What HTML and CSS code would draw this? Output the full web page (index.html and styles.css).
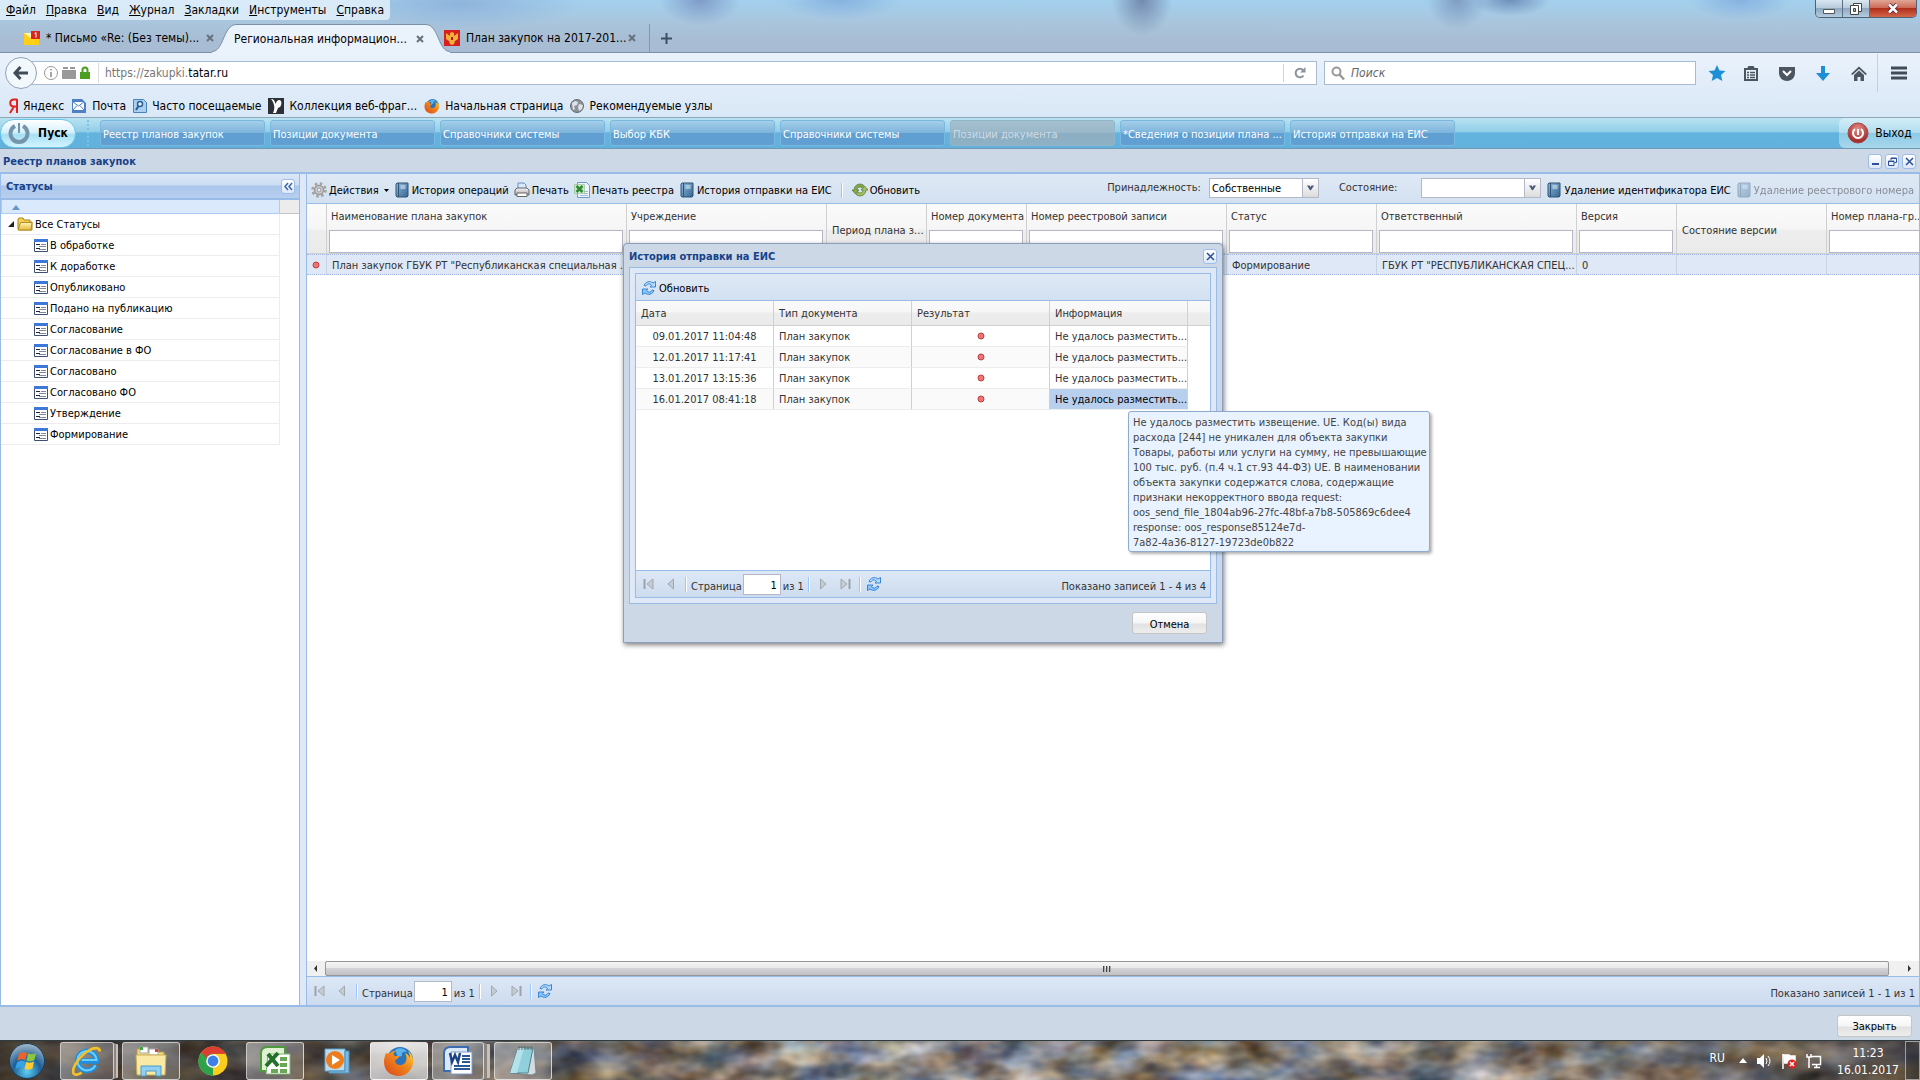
FILE: index.html
```
<!DOCTYPE html>
<html lang="ru">
<head>
    <meta charset="UTF-8">
    <meta name="viewport" content="width=device-width, initial-scale=1.0">
    <title>Реестр планов закупок</title>
    <link rel="stylesheet" href="styles.css">
</head>
<body>

<!-- Иконки -->
<svg class="sprite" xmlns="http://www.w3.org/2000/svg">
    <defs>
        <linearGradient id="gBook" x1="0" x2="1" y1="0" y2="1"><stop offset="0" stop-color="#8fbbe0"/><stop offset="1" stop-color="#35648f"/></linearGradient>
        <linearGradient id="gSilver" x1="0" x2="0" y1="0" y2="1"><stop offset="0" stop-color="#f6f6f6"/><stop offset="1" stop-color="#a9a9a9"/></linearGradient>
        <radialGradient id="gOrb" cx=".5" cy=".8" r=".8"><stop offset="0" stop-color="#5fd0f5"/><stop offset=".5" stop-color="#1d5f96"/><stop offset="1" stop-color="#a9bccb"/></radialGradient>
        <radialGradient id="gRed" cx=".5" cy=".3" r=".8"><stop offset="0" stop-color="#e8908a"/><stop offset="1" stop-color="#8d1010"/></radialGradient>
        <linearGradient id="gFox" x1="0" x2="1" y1="1" y2="0"><stop offset="0" stop-color="#d8431b"/><stop offset=".6" stop-color="#f28a1c"/><stop offset="1" stop-color="#ffd83c"/></linearGradient>
        <linearGradient id="gFolder" x1="0" x2="0" y1="0" y2="1"><stop offset="0" stop-color="#fff6b8"/><stop offset="1" stop-color="#e8b93c"/></linearGradient>
        <linearGradient id="gShade" x1="0" x2="1" y1="0" y2="0"><stop offset="0" stop-color="#1c1610" stop-opacity=".7"/><stop offset=".25" stop-color="#33271c" stop-opacity=".45"/><stop offset=".4" stop-color="#33271c" stop-opacity="0"/><stop offset=".8" stop-color="#33271c" stop-opacity=".1"/><stop offset="1" stop-color="#241c16" stop-opacity=".6"/></linearGradient>
    </defs>
    <symbol id="i-close" viewBox="0 0 8 8"><path d="M1 1l6 6M7 1L1 7" stroke="currentColor" stroke-width="2"/></symbol>
    <symbol id="i-book" viewBox="0 0 16 16"><path d="M3 1h11v13l-1 1H3L2 14V2z" fill="url(#gBook)" stroke="#2f5374"/><path d="M4.500 1v14" stroke="#2f5374"/><path d="M6.500 4h5M6.500 6h5" stroke="#e3f0fb"/></symbol>
    <symbol id="i-gear" viewBox="0 0 16 16"><circle cx="8" cy="8" r="6.500" fill="none" stroke="#a3a3a3" stroke-width="2.500" stroke-dasharray="2.600 2.500"/><circle cx="8" cy="8" r="4.500" fill="#cfcfcf" stroke="#9a9a9a" stroke-width="1.500"/><circle cx="8" cy="8" r="2" fill="#e6eef8" stroke="#999"/></symbol>
    <symbol id="i-print" viewBox="0 0 16 16"><path d="M4 8V1h6l2 2v5z" fill="#d7e9fb" stroke="#6b8fb5"/><path d="M1 8l2-2h10l2 2v5H1z" fill="url(#gSilver)" stroke="#666"/><path d="M3 11h10v3.500H3z" fill="#fff" stroke="#666"/></symbol>
    <symbol id="i-xls" viewBox="0 0 16 16"><path d="M3.500.5h9l3 3v12h-12z" fill="#eef5ff" stroke="#6f97c4"/><path d="M10 9.500h4M10 11.500h4M6 13.500h8" stroke="#9dbbe0"/><path d="M.5 2.500h10v9H.5z" fill="#cde8c8" stroke="#7cb07a" stroke-width=".5"/><path d="M2.500 4l6 6M8.500 4l-6 6" stroke="#2f8a35" stroke-width="2.500"/></symbol>
    <symbol id="i-sync" viewBox="0 0 16 16"><path d="M8 2a6 6 0 0 0-6 6H0l3.500 4L7 8H5a3 3 0 0 1 5-2.200l2-2.200A6 6 0 0 0 8 2z" fill="#84a848" stroke="#50722a" stroke-width=".7"/><path d="M8 14a6 6 0 0 0 6-6h2l-3.500-4L9 8h2a3 3 0 0 1-5 2.200l-2 2.200A6 6 0 0 0 8 14z" fill="#a0bf62" stroke="#50722a" stroke-width=".7"/></symbol>
    <symbol id="i-refresh" viewBox="0 0 16 16"><path d="M3 5.500C4.500 1.500 9 .5 12 3l2.500-1.500V7H9l1.500-1.800C8.500 3.200 6 3.600 5 6z" fill="#b5dafb" stroke="#2a7dd0" stroke-width=".9"/><path d="M13 10.500C11.500 14.500 7 15.500 4 13l-2.500 1.500V9H7l-1.500 1.800c2 2 4.500 1.600 5.500-.8z" fill="#8cc5f8" stroke="#2a7dd0" stroke-width=".9"/></symbol>
    <symbol id="i-first" viewBox="0 0 16 16"><path d="M3.500 3v10" stroke="#9aa2ab" stroke-width="2"/><path d="M12 3v10L6 8z" fill="#c5cbd2" stroke="#a0a8b0"/></symbol>
    <symbol id="i-prev" viewBox="0 0 16 16"><path d="M10.500 3v10L5 8z" fill="#c5cbd2" stroke="#a0a8b0"/></symbol>
    <symbol id="i-next" viewBox="0 0 16 16"><path d="M5.500 3v10L11 8z" fill="#c5cbd2" stroke="#a0a8b0"/></symbol>
    <symbol id="i-last" viewBox="0 0 16 16"><path d="M12.500 3v10" stroke="#9aa2ab" stroke-width="2"/><path d="M4 3v10l6-5z" fill="#c5cbd2" stroke="#a0a8b0"/></symbol>
    <symbol id="i-folder" viewBox="0 0 16 16"><path d="M1 13V3l1-1h4l1 2h6v2h2v8H2z" fill="#f3cf55" stroke="#a98518"/><path d="M1 14L3.500 6.500H15L14 14z" fill="url(#gFolder)" stroke="#b48f22"/></symbol>
    <symbol id="i-form" viewBox="0 0 14 13"><path d="M.5.5h13v12H.5z" fill="#fff" stroke="#3f4f74"/><path d="M0 0h14v3H0z" fill="#3d78d8"/><path d="M2 5.500h4M2 9.500h4" stroke="#223"/><path d="M5 7.500h7M7 5.500h5M5 10.500h7" stroke="#7c8797"/></symbol>
    <symbol id="i-dot" viewBox="0 0 8 8"><circle cx="4" cy="4" r="3" fill="#e87878" stroke="#c93a3f"/></symbol>
    <symbol id="i-fox" viewBox="0 0 32 32"><circle cx="17" cy="15" r="13" fill="#2a74bd"/><path d="M12 5c4-3 10-2 12 2-4-1-6 1-5 4l-4 1z" fill="#5cb4ea"/><path d="M3 8c1 1 3 1 4 0 2-2 4-2 6-2-3 2-3 4-1 5h4c0 3-3 3-4 5 1 5 7 5 10 2 2-3 2-7 0-10 3 1 4 3 5 5 0-3-1-5-2-7 4 3 6 8 5 13-2 8-8 12-14 12C8 31 1 26 1 17c0-4 1-6 2-9z" fill="url(#gFox)"/></symbol>
    <symbol id="i-chevron" viewBox="0 0 8 6"><path d="M0 0h3l1 2 1-2h3L4.500 5.500h-1z" fill="#44567c"/></symbol>
</svg>

<!-- Окно браузера -->
<header class="browser">
    <nav class="menubar">
        <a href="#"><u>Ф</u>айл</a>
        <a href="#"><u>П</u>равка</a>
        <a href="#"><u>В</u>ид</a>
        <a href="#"><u>Ж</u>урнал</a>
        <a href="#"><u>З</u>акладки</a>
        <a href="#"><u>И</u>нструменты</a>
        <a href="#"><u>С</u>правка</a>
    </nav>
    <div class="win-buttons">
        <button aria-label="Свернуть"><svg width="14" height="12" viewBox="0 0 14 12"><path d="M1.500 6.500h11v4h-11z" fill="#fff" stroke="#555"/></svg></button>
        <button aria-label="Восстановить"><svg width="12" height="13" viewBox="0 0 12 13"><path d="M3.500 1.500h8v8h-8z" fill="#fff" stroke="#444"/><path d="M.5 3.500h8v9h-8z" fill="#fff" stroke="#444"/><path d="M3.500 6.500h2v3h-2z" fill="#9db4c8" stroke="#444"/></svg></button>
        <button class="win-close" aria-label="Закрыть окно"><svg width="12" height="11" viewBox="0 0 12 11"><path d="M2 1.500l8 8M10 1.500l-8 8" stroke="#523" stroke-width="4"/><path d="M2 1.500l8 8M10 1.500l-8 8" stroke="#fff" stroke-width="2.500"/></svg></button>
    </div>

    <div class="tabs">
        <div class="tab tab-mail">
            <svg width="16" height="14" viewBox="0 0 16 14"><path d="M0 2h15v12H0z" fill="#ffcf17"/><path d="M0 2l8 6V2z" fill="#fff3ba"/><path d="M7 0h9v8H7z" fill="#d9261c"/><path d="M10.500 2.500l1.500-1v5" stroke="#fff" fill="none"/></svg>
            <span class="tab-text">* Письмо «Re: (Без темы)...</span>
            <button class="tab-close" aria-label="Закрыть вкладку"><svg width="8" height="8"><use href="#i-close"/></svg></button>
        </div>
        <div class="tab tab-active">
            <svg class="edge" width="24" height="29" viewBox="0 0 24 29"><path d="M0 29V27.500C12 27.500 11 1 24 .5V29z" fill="#eaf2fc"/><path d="M0 27.500C12 27.500 11 1 24 .5" fill="none" stroke="#7b90a6"/></svg>
            <div class="tab-body">
                <span class="tab-text">Региональная информацион...</span>
                <button class="tab-close" aria-label="Закрыть вкладку"><svg width="8" height="8"><use href="#i-close"/></svg></button>
            </div>
            <svg class="edge" width="24" height="29" viewBox="0 0 24 29"><path d="M24 29V27.500C12 27.500 13 1 0 .5V29z" fill="#eaf2fc"/><path d="M24 27.500C12 27.500 13 1 0 .5" fill="none" stroke="#7b90a6"/></svg>
        </div>
        <div class="tab tab-plan">
            <svg width="16" height="16" viewBox="0 0 16 16"><path d="M0 0h16v16H0z" fill="#d81f1f"/><path d="M2 3l4 3V3l2-1 2 1v3l4-3v6l-3 2-1 3-2 1-2-1-1-3-3-2z" fill="#f0b13a"/><path d="M7 7h2v3H7z" fill="#b01717"/></svg>
            <span class="tab-text">План закупок на 2017-201...</span>
            <button class="tab-close" aria-label="Закрыть вкладку"><svg width="8" height="8"><use href="#i-close"/></svg></button>
        </div>
        <button class="tab-new" aria-label="Новая вкладка"><svg width="11" height="11" viewBox="0 0 11 11"><path d="M5.500 0v11M0 5.500h11" stroke="#3d4f63" stroke-width="2"/></svg></button>
    </div>

    <div class="navbar">
        <button class="back" aria-label="Назад"><svg width="16" height="14" viewBox="0 0 16 14"><path d="M7.500 1L2 7l5.500 6M2 7h13" fill="none" stroke="#414b57" stroke-width="3"/></svg></button>
        <div class="urlbar">
            <svg width="14" height="14" viewBox="0 0 14 14"><circle cx="7" cy="7" r="6.500" fill="none" stroke="#999"/><path d="M7 6v5M7 3v1.500" stroke="#888" stroke-width="1.500"/></svg>
            <svg width="14" height="14" viewBox="0 0 14 14"><path d="M0 4h14v9H0zM1 1h5v2H1zM8 1h5v2H8z" fill="#999"/></svg>
            <svg width="10" height="14" viewBox="0 0 10 14"><path d="M2.500 7V4a2.500 2.500 0 0 1 5 0v3" fill="none" stroke="#4a9e22" stroke-width="2"/><path d="M0 6h10v7H0z" fill="#4a9e22"/></svg>
            <span class="url">https://zakupki.<b>tatar.ru</b></span>
            <button class="reload" aria-label="Обновить страницу"><svg width="12" height="12" viewBox="0 0 12 12"><path d="M9.500 8.500A4.300 4.300 0 1 1 9 3" fill="none" stroke="#8a939c" stroke-width="2"/><path d="M11.500 0v5.500H6z" fill="#8a939c"/></svg></button>
        </div>
        <div class="search">
            <svg width="14" height="15" viewBox="0 0 14 15"><circle cx="5.500" cy="5.500" r="4" fill="none" stroke="#999" stroke-width="2"/><path d="M8.500 8.500l4.500 5" stroke="#999" stroke-width="2.500"/></svg>
            <input type="text" placeholder="Поиск" aria-label="Поиск">
        </div>
        <div class="nav-icons">
            <button class="nav-star" aria-label="Закладка"><svg width="18" height="18" viewBox="0 0 18 18"><path d="M9 1l2.500 5.500 6 .6-4.500 4 1.300 6L9 14l-5.300 3.100 1.300-6-4.500-4 6-.6z" fill="#1c8fd6"/></svg></button>
            <button aria-label="Список закладок"><svg width="16" height="16" viewBox="0 0 16 16"><path d="M2 4h12v11H2zM5 4l1-2h4l1 2" fill="none" stroke="#4c5661" stroke-width="2"/><path d="M4 7.500h2M7 7.500h5M4 10h2M7 10h5M4 12.500h2M7 12.500h5" stroke="#4c5661" stroke-width="1.500"/></svg></button>
            <button aria-label="Pocket"><svg width="16" height="15" viewBox="0 0 16 15"><path d="M0 1h16v6c0 5-4 8-8 8s-8-3-8-8z" fill="#4c5661"/><path d="M4 5l4 4 4-4" fill="none" stroke="#fff" stroke-width="2"/></svg></button>
            <button aria-label="Загрузки"><svg width="14" height="15" viewBox="0 0 14 15"><path d="M5 0h4v7h5l-7 8-7-8h5z" fill="#1c8fd6"/></svg></button>
            <button aria-label="Домой"><svg width="16" height="15" viewBox="0 0 16 15"><path d="M0 8l8-7.500L16 8l-1.500 1L8 3 1.500 9z" fill="#4c5661"/><path d="M3 9l5-4.500L13 9v6h-3.500v-4h-3v4H3z" fill="#4c5661"/></svg></button>
            <button class="nav-menu" aria-label="Меню"><svg width="16" height="14" viewBox="0 0 16 14"><path d="M0 2h16M0 7h16M0 12h16" stroke="#414b57" stroke-width="3"/></svg></button>
        </div>
    </div>

    <nav class="bookmarks">
        <a href="#"><svg width="10" height="16" viewBox="0 0 10 16"><path d="M9 1v14M9 1.500H6C1 1.500 1 8.500 6 8.500h3M6 8.500L2 15" fill="none" stroke="#e3231b" stroke-width="2"/></svg>Яндекс</a>
        <a href="#"><svg width="16" height="16" viewBox="0 0 16 16"><path d="M1 1h10l4 4v10H1z" fill="#4f80c4"/><path d="M2 4h11v8H2z" fill="#fff"/><path d="M2 4l5.500 4L13 4M2 12l4-4.500M13 12L9 7.500" fill="none" stroke="#4f80c4"/></svg>Почта</a>
        <a href="#"><svg width="14" height="16" viewBox="0 0 14 16"><path d="M.5 1.500h10l3 3v10H.5z" fill="#a9d0f0" stroke="#4a83b8"/><circle cx="7" cy="6" r="2.500" fill="#eaf5ff" stroke="#2c5f94" stroke-width="1.500"/><path d="M5.500 8L3 12" stroke="#2c5f94" stroke-width="2"/></svg>Часто посещаемые</a>
        <a href="#"><svg width="16" height="16" viewBox="0 0 16 16"><path d="M0 0h16v16H0z" fill="#2d3037"/><path d="M3 1c3 0 4 2 4.500 5C9 2 11 1 13 3c1 3 0 6-3 7L8 15H5c2-4 2-9-2-14z" fill="#fff"/></svg>Коллекция веб-фраг...</a>
        <a href="#"><svg width="16" height="16"><use href="#i-fox"/></svg>Начальная страница</a>
        <a href="#"><svg width="14" height="14" viewBox="0 0 14 14"><circle cx="7" cy="7" r="6.500" fill="#8b9198" stroke="#646a71"/><path d="M2 4l3-2 3 1-1 3-3 1 1 3-2 1zM9 5l4 1-1 4-3 2-1-4z" fill="#dfe3e7"/></svg>Рекомендуемые узлы</a>
    </nav>
</header>

<!-- Панель задач приложения -->
<div class="appbar">
    <button class="start"><svg width="22" height="22" viewBox="0 0 22 22"><path d="M7 4a8.500 8.500 0 1 0 8 0" fill="none" stroke="#7595ab" stroke-width="4"/><path d="M11 1v10" stroke="#7595ab" stroke-width="2"/></svg>Пуск</button>
    <div class="app-tasks">
        <button>Реестр планов закупок</button>
        <button>Позиции документа</button>
        <button>Справочники системы</button>
        <button>Выбор КБК</button>
        <button>Справочники системы</button>
        <button disabled>Позиции документа</button>
        <button>*Сведения о позиции плана ...</button>
        <button>История отправки на ЕИС</button>
    </div>
    <button class="exit"><svg width="22" height="22" viewBox="0 0 22 22"><circle cx="11" cy="11" r="10" fill="url(#gRed)" stroke="#a44"/><path d="M8 7a5 5 0 1 0 6 0" fill="none" stroke="#fff" stroke-width="2"/><path d="M11 7v6" stroke="#fff" stroke-width="2"/></svg>Выход</button>
</div>

<main class="window">
    <div class="window-title">
        <h1>Реестр планов закупок</h1>
        <div class="tools">
            <button class="tool" aria-label="Свернуть"><svg width="9" height="9" viewBox="0 0 9 9"><path d="M1 7h7" stroke="#2c4f9c" stroke-width="2"/></svg></button>
            <button class="tool" aria-label="Восстановить"><svg width="9" height="9" viewBox="0 0 9 9"><path d="M3 3V1h5.500v4.500h-2M3 1.500h6M.5 4h5.500v4.500H.5zM.5 4.500H6" fill="none" stroke="#2c4f9c"/></svg></button>
            <button class="tool" aria-label="Закрыть"><svg width="9" height="9" viewBox="0 0 9 9"><path d="M1 1l7 7M8 1L1 8" stroke="#2c4f9c" stroke-width="1.500"/></svg></button>
        </div>
    </div>

    <div class="work">
        <aside class="sidebar">
            <div class="sidebar-head">
                <h2>Статусы</h2>
                <button class="tool" aria-label="Скрыть панель"><svg width="9" height="9" viewBox="0 0 9 9"><path d="M4 1L1 4.500 4 8M8 1L5 4.500 8 8" fill="none" stroke="#3b66ad" stroke-width="1.500"/></svg></button>
            </div>
            <div class="tree-head"><span><svg width="8" height="5" viewBox="0 0 8 5"><path d="M4 0l4 5H0z" fill="#6593cf"/></svg></span></div>
            <ul class="tree">
                <li class="root"><svg width="8" height="8" viewBox="0 0 8 8"><path d="M7 1v6H1z" fill="#222"/></svg><svg width="16" height="16"><use href="#i-folder"/></svg>Все Статусы</li>
                <li><svg width="14" height="13"><use href="#i-form"/></svg>В обработке</li>
                <li><svg width="14" height="13"><use href="#i-form"/></svg>К доработке</li>
                <li><svg width="14" height="13"><use href="#i-form"/></svg>Опубликовано</li>
                <li><svg width="14" height="13"><use href="#i-form"/></svg>Подано на публикацию</li>
                <li><svg width="14" height="13"><use href="#i-form"/></svg>Согласование</li>
                <li><svg width="14" height="13"><use href="#i-form"/></svg>Согласование в ФО</li>
                <li><svg width="14" height="13"><use href="#i-form"/></svg>Согласовано</li>
                <li><svg width="14" height="13"><use href="#i-form"/></svg>Согласовано ФО</li>
                <li><svg width="14" height="13"><use href="#i-form"/></svg>Утверждение</li>
                <li><svg width="14" height="13"><use href="#i-form"/></svg>Формирование</li>
            </ul>
        </aside>

        <section class="registry">
            <div class="toolbar">
                <button class="btn"><svg width="16" height="16"><use href="#i-gear"/></svg>Действия<svg width="5" height="3" viewBox="0 0 5 3"><path d="M0 0h5L2.500 3z"/></svg></button>
                <button class="btn"><svg width="16" height="16"><use href="#i-book"/></svg>История операций</button>
                <button class="btn"><svg width="16" height="16"><use href="#i-print"/></svg>Печать</button>
                <button class="btn"><svg width="16" height="16"><use href="#i-xls"/></svg>Печать реестра</button>
                <button class="btn"><svg width="16" height="16"><use href="#i-book"/></svg>История отправки на ЕИС</button>
                <i class="sep"></i>
                <button class="btn"><svg width="16" height="16"><use href="#i-sync"/></svg>Обновить</button>
                <div class="filters">
                    <label for="owner">Принадлежность:</label>
                    <div class="combo"><select id="owner"><option>Собственные</option></select><svg width="8" height="6"><use href="#i-chevron"/></svg></div>
                    <label for="state">Состояние:</label>
                    <div class="combo combo-wide"><select id="state"><option></option></select><svg width="8" height="6"><use href="#i-chevron"/></svg></div>
                </div>
                <button class="btn"><svg width="16" height="16"><use href="#i-book"/></svg>Удаление идентификатора ЕИС</button>
                <button class="btn" disabled><svg width="16" height="16"><use href="#i-book"/></svg>Удаление реестрового номера</button>
            </div>

            <div class="grid-wrap">
                <table class="grid">
                    <colgroup>
                        <col class="w20"><col class="w300"><col class="w200"><col class="w100"><col class="w100"><col class="w200">
                        <col class="w150"><col class="w200"><col class="w100"><col class="w150"><col class="w100">
                    </colgroup>
                    <thead>
                        <tr>
                            <th></th>
                            <th><label for="f1">Наименование плана закупок</label><input id="f1" type="text"></th>
                            <th><label for="f2">Учреждение</label><input id="f2" type="text"></th>
                            <th class="plain">Период плана з...</th>
                            <th><label for="f3">Номер документа</label><input id="f3" type="text"></th>
                            <th><label for="f4">Номер реестровой записи</label><input id="f4" type="text"></th>
                            <th><label for="f5">Статус</label><input id="f5" type="text"></th>
                            <th><label for="f6">Ответственный</label><input id="f6" type="text"></th>
                            <th><label for="f7">Версия</label><input id="f7" type="text"></th>
                            <th class="plain">Состояние версии</th>
                            <th><label for="f8">Номер плана-гр...</label><input id="f8" type="text"></th>
                        </tr>
                    </thead>
                    <tbody>
                        <tr>
                            <td class="mark"><svg width="8" height="8"><use href="#i-dot"/></svg></td>
                            <td>План закупок ГБУК РТ "Республиканская специальная ...</td>
                            <td></td>
                            <td></td>
                            <td></td>
                            <td></td>
                            <td>Формирование</td>
                            <td>ГБУК РТ "РЕСПУБЛИКАНСКАЯ СПЕЦ...</td>
                            <td>0</td>
                            <td></td>
                            <td></td>
                        </tr>
                    </tbody>
                </table>
            </div>

            <div class="hscroll">
                <svg width="18" height="14" viewBox="0 0 18 14"><path d="M10 4v7L7 7.500z" fill="#333"/></svg>
                <div class="thumb"><i></i><i></i><i></i></div>
                <svg width="30" height="14" viewBox="0 0 30 14"><path d="M19 4v7l3-3.500z" fill="#333"/></svg>
            </div>

            <div class="paging">
                <button aria-label="Первая" disabled><svg width="16" height="16"><use href="#i-first"/></svg></button>
                <button aria-label="Предыдущая" disabled><svg width="16" height="16"><use href="#i-prev"/></svg></button>
                <i class="sep"></i>
                <label for="page">Страница</label>
                <input id="page" type="text" value="1">
                <span>из 1</span>
                <i class="sep"></i>
                <button aria-label="Следующая" disabled><svg width="16" height="16"><use href="#i-next"/></svg></button>
                <button aria-label="Последняя" disabled><svg width="16" height="16"><use href="#i-last"/></svg></button>
                <i class="sep"></i>
                <button aria-label="Обновить"><svg width="16" height="16"><use href="#i-refresh"/></svg></button>
                <span class="total">Показано записей 1 - 1 из 1</span>
            </div>
        </section>
    </div>

    <div class="window-foot"><button class="push">Закрыть</button></div>

    <!-- История отправки -->
    <div class="dialog" role="dialog" aria-labelledby="dlgTitle">
        <div class="dialog-title">
            <h2 id="dlgTitle">История отправки на ЕИС</h2>
            <button class="tool" aria-label="Закрыть"><svg width="9" height="9" viewBox="0 0 9 9"><path d="M1 1l7 7M8 1L1 8" stroke="#2c4f9c" stroke-width="1.500"/></svg></button>
        </div>
        <div class="dialog-body">
            <div class="dialog-panel">
                <div class="toolbar">
                    <button class="btn"><svg width="16" height="16"><use href="#i-refresh"/></svg>Обновить</button>
                </div>
                <div class="history-wrap">
                    <table class="history">
                        <thead>
                            <tr><th>Дата</th><th>Тип документа</th><th>Результат</th><th>Информация</th><th class="rest"></th></tr>
                        </thead>
                        <tbody>
                            <tr><td class="mid">09.01.2017 11:04:48</td><td>План закупок</td><td class="mid"><svg width="8" height="8"><use href="#i-dot"/></svg></td><td>Не удалось разместить...</td></tr>
                            <tr><td class="mid">12.01.2017 11:17:41</td><td>План закупок</td><td class="mid"><svg width="8" height="8"><use href="#i-dot"/></svg></td><td>Не удалось разместить...</td></tr>
                            <tr><td class="mid">13.01.2017 13:15:36</td><td>План закупок</td><td class="mid"><svg width="8" height="8"><use href="#i-dot"/></svg></td><td>Не удалось разместить...</td></tr>
                            <tr><td class="mid">16.01.2017 08:41:18</td><td>План закупок</td><td class="mid"><svg width="8" height="8"><use href="#i-dot"/></svg></td><td class="selected">Не удалось разместить...</td></tr>
                        </tbody>
                    </table>
                </div>
                <div class="paging">
                    <button aria-label="Первая" disabled><svg width="16" height="16"><use href="#i-first"/></svg></button>
                    <button aria-label="Предыдущая" disabled><svg width="16" height="16"><use href="#i-prev"/></svg></button>
                    <i class="sep"></i>
                    <label for="dlgPage">Страница</label>
                    <input id="dlgPage" type="text" value="1">
                    <span>из 1</span>
                    <i class="sep"></i>
                    <button aria-label="Следующая" disabled><svg width="16" height="16"><use href="#i-next"/></svg></button>
                    <button aria-label="Последняя" disabled><svg width="16" height="16"><use href="#i-last"/></svg></button>
                    <i class="sep"></i>
                    <button aria-label="Обновить"><svg width="16" height="16"><use href="#i-refresh"/></svg></button>
                    <span class="total">Показано записей 1 - 4 из 4</span>
                </div>
            </div>
        </div>
        <div class="dialog-foot"><button class="push">Отмена</button></div>

        <div class="tip" role="tooltip">
            Не удалось разместить извещение. UE. Код(ы) вида<br>
            расхода [244] не уникален для объекта закупки<br>
            Товары, работы или услуги на сумму, не превышающие<br>
            100 тыс. руб. (п.4 ч.1 ст.93 44-ФЗ) UE. В наименовании<br>
            объекта закупки содержатся слова, содержащие<br>
            признаки некорректного ввода request:<br>
            oos_send_file_1804ab96-27fc-48bf-a7b8-505869c6dee4<br>
            response: oos_response85124e7d-<br>
            7a82-4a36-8127-19723de0b822
        </div>
    </div>
</main>

<!-- Панель задач Windows -->
<footer class="taskbar">
    <svg class="stones" width="100%" height="100%">
        <filter id="stone" x="0" y="0" width="100%" height="100%" color-interpolation-filters="sRGB">
            <feTurbulence type="fractalNoise" baseFrequency="0.022 0.04" numOctaves="3" seed="8"/>
            <feColorMatrix values=".9 .4 0 0 -.12  .9 .1 .1 0 -.04  .8 -.2 .4 0 0  0 0 0 0 1"/>
        </filter>
        <rect width="100%" height="100%" filter="url(#stone)"/>
        <rect width="100%" height="100%" fill="url(#gShade)"/>
    </svg>
    <button class="orb" aria-label="Пуск Windows"><svg width="38" height="38" viewBox="0 0 38 38"><circle cx="19" cy="19" r="17.500" fill="url(#gOrb)" stroke="#173a58"/><path d="M11 12c3-2 5-2 8-1l-1.500 7c-3-1-5-1-8 1z" fill="#f0622c"/><path d="M20 11.500c3 1 5 1 8-.5l-1.500 7c-3 1.500-5 1.500-8 .5z" fill="#8cc63f"/><path d="M9 20.500c3-2 5-2 8-1L15.500 26c-3-1-5-1-8 1z" fill="#35a3e8"/><path d="M18 20c3 1 5 1 8-.5l-1.500 7c-3 1.500-5 1.500-8 .5z" fill="#ffcc2f"/></svg></button>
    <div class="apps">
        <button class="run stack" aria-label="Internet Explorer"><svg width="34" height="34" viewBox="0 0 32 32"><path d="M24 20A9 9 0 1 1 25 16H10" fill="none" stroke="#1b8fe0" stroke-width="5"/><path d="M24 20A9 9 0 1 1 25 15H11" fill="none" stroke="#70cdfa" stroke-width="2"/><path d="M28 7c0-4-5-4-10-1C9 11 2 22 3 27c1 3 5 2 8 0" fill="none" stroke="#f5c126" stroke-width="2.500"/></svg></button>
        <button class="run" aria-label="Проводник"><svg width="32" height="32" viewBox="0 0 32 32"><path d="M2 4h9l2 3h16v22H2z" fill="#f3da84" stroke="#b59a48"/><path d="M5 2h8v6H5zM14 4h9v6h-9z" fill="#fff" stroke="#aaa"/><path d="M5 2h3v3H5z" fill="#3aa545"/><path d="M20 4h3v3h-3z" fill="#d9423a"/><path d="M1 10h30l-1 20H2z" fill="#fae9a5" stroke="#c9ac54"/><path d="M6 31V21h20v10h-5v-5H11v5z" fill="#8fd0f2" stroke="#4a9cc9"/></svg></button>
        <button class="pin" aria-label="Chrome"><svg width="30" height="30" viewBox="0 0 30 30"><circle cx="15" cy="15" r="14.500" fill="#fbcd1f"/><path d="M2.400 7.700A14.500 14.500 0 0 1 27.600 7.700H15z" fill="#dc3e32"/><path d="M2.400 7.700L8.700 18.600 15 21.800 15 29.500A14.500 14.500 0 0 1 2.400 7.700z" fill="#2ba24c"/><path d="M2.400 7.700H15v7l-6.300 4z" fill="#2ba24c"/><path d="M4 6a14.500 14.500 0 0 1 23.600 1.700H15a7 7 0 0 0-6.500 4.500z" fill="#dc3e32"/><circle cx="15" cy="15" r="6.800" fill="#fff"/><circle cx="15" cy="15" r="5.400" fill="#3f7fe8"/></svg></button>
        <button class="run" aria-label="Excel"><svg width="32" height="32" viewBox="0 0 32 32"><path d="M2 8c0-4 3-6 7-6h17v24H2z" fill="#dff0d4" stroke="#4c9a3c" stroke-width="2"/><path d="M9 9h22v20H7z" fill="#fff" stroke="#7cb56c"/><path d="M21 12h7v4h-7zM21 18h7v4h-7zM12 24h7v4h-7zM21 24h7v4h-7z" fill="#69a856"/><path d="M9 9l10 12M19 8L7 21" stroke="#22702a" stroke-width="4"/></svg></button>
        <button class="pin" aria-label="Media Player"><svg width="28" height="28" viewBox="0 0 28 28"><path d="M2 2h20v22H2z" fill="#b9dcf2" stroke="#5fa1c9"/><path d="M22 4h4v22H6v-2h16z" fill="#7fbbe0" stroke="#4c8db8"/><circle cx="12" cy="13" r="9" fill="#ef7d1a"/><path d="M9 8v10l8-5z" fill="#fff"/></svg></button>
        <button class="run lit" aria-label="Firefox"><svg width="32" height="32"><use href="#i-fox"/></svg></button>
        <button class="run stack2" aria-label="Word"><svg width="32" height="32" viewBox="0 0 32 32"><path d="M2 8c0-4 3-6 7-6h17v24H2z" fill="#dbe8f8" stroke="#3c6cb0" stroke-width="2"/><path d="M9 7h21v22H9z" fill="#fff" stroke="#7c9cc8"/><path d="M20 11h8M20 14h8M20 17h8M12 21h16M12 24h16" stroke="#2a579a" stroke-width="2"/><path d="M8 8l2 9 3-7 3 7 2-9" fill="none" stroke="#1e4488" stroke-width="2.500"/></svg></button>
        <button class="run" aria-label="Блокнот"><svg width="30" height="32" viewBox="0 0 30 32"><path d="M10 3h16l2 25-4 2-21-2z" fill="#d5dcdf" stroke="#7b8a90"/><path d="M10 3h15l-5 25H2z" fill="#8fd0dc" stroke="#51808c"/><path d="M10 3h6L9 28H2z" fill="#b5e2ea"/><path d="M11 1v4M14 1v4M17 1v4M20 1v4M23 1v4" stroke="#666"/></svg></button>
    </div>
    <div class="tray">
        <span class="lang">RU</span>
        <svg width="8" height="5" viewBox="0 0 8 5"><path d="M4 0l4 5H0z" fill="#fff"/></svg>
        <svg width="16" height="16" viewBox="0 0 16 16"><path d="M1 5h3l4-4v14l-4-4H1z" fill="#fff"/><path d="M10 5q2 3 0 6M12 3q4 5 0 10" fill="none" stroke="#fff"/></svg>
        <svg width="16" height="16" viewBox="0 0 16 16"><path d="M2 1v15M2 2h6l1 1h5v7H3" fill="#fff" stroke="#fff" stroke-width="1.500"/><circle cx="11" cy="11" r="4.500" fill="#d22"/><path d="M9 9l4 4M13 9l-4 4" stroke="#fff" stroke-width="1.500"/></svg>
        <svg width="16" height="16" viewBox="0 0 16 16"><path d="M5 3.500h9.500v8H6M8 14.500h6M10.500 12v2" fill="none" stroke="#fff" stroke-width="1.500"/><path d="M1 1v3h4V1M3 4v11" fill="none" stroke="#fff" stroke-width="1.500"/></svg>
        <div class="clock"><span>11:23</span><span>16.01.2017</span></div>
    </div>
    <button class="show-desktop" aria-label="Свернуть все окна"></button>
</footer>

</body>
</html>
```
FILE: styles.css
```
* {
    box-sizing: border-box;
}
body {
    margin: 0;
    height: 100vh;
    display: flex;
    flex-direction: column;
    overflow: hidden;
    font-family: "DejaVu Sans Condensed", "Noto Sans", sans-serif;
    font-size: 11px;
    color: #000;
    background: #fff;
}
button, input, select {
    font: inherit;
    color: inherit;
    margin: 0;
}
button {
    border: none;
    background: none;
    padding: 0;
    display: flex;
    align-items: center;
    justify-content: center;
    white-space: nowrap;
}
svg {
    flex: none;
    display: block;
}
a {
    color: inherit;
    text-decoration: none;
}
h1, h2 {
    margin: 0;
    font-size: 11px;
    font-weight: bold;
    color: #15428b;
}
.sprite {
    position: absolute;
    width: 0;
    height: 0;
}

/* Браузер */
.browser {
    position: relative;
    flex: none;
    font-size: 12px;
    background:
        radial-gradient(ellipse 40px 26px at 700px 0, #7f9cc8, transparent),
        radial-gradient(ellipse 120px 26px at 460px 4px, #8fb4dc, transparent),
        radial-gradient(ellipse 30px 36px at 1142px 0, #7389ad, transparent),
        radial-gradient(ellipse 60px 20px at 840px 0, #86b2e0, transparent),
        radial-gradient(ellipse 30px 30px at 1457px 0, #7f9cc2, transparent),
        radial-gradient(ellipse 40px 16px at 1510px 0, #6f8fba, transparent),
        radial-gradient(ellipse 50px 20px at 1740px 0, #86b2e0, transparent),
        linear-gradient(#a3d0ee, #a9c5dc 24px, #a8bdd3 40px);
}
.menubar {
    width: 390px;
    height: 20px;
    padding: 0 6px;
    display: flex;
    justify-content: space-between;
    align-items: center;
    background: rgba(235, 244, 252, .75);
    border-radius: 0 0 4px 0;
}
.win-buttons {
    position: absolute;
    top: 0;
    right: 3px;
    display: flex;
    height: 18px;
    border: 1px solid #4f6275;
    border-top: none;
    border-radius: 0 0 5px 5px;
    overflow: hidden;
}
.win-buttons button {
    width: 27px;
    border-right: 1px solid #5c7084;
    background: linear-gradient(#dbe7f1, #b4c8da 50%, #8fa9c0 50%, #b5cce0);
}
.win-buttons .win-close {
    width: 46px;
    border-right: none;
    background: linear-gradient(#e0a595, #cc6552 50%, #b02f1c 50%, #d4674a);
}
.tabs {
    height: 33px;
    padding-left: 24px;
    display: flex;
    align-items: flex-end;
    border-bottom: 1px solid #7b90a6;
}
.tab {
    height: 28px;
    display: flex;
    align-items: center;
}
.tab-text {
    flex: 1;
    white-space: nowrap;
    margin-left: 6px;
}
.tab-mail {
    width: 192px;
}
.tab-close {
    width: 12px;
    color: #66717d;
}
.tab-active {
    height: 29px;
    margin-left: -4px;
    margin-bottom: -1px;
}
.tab-body {
    width: 190px;
    height: 29px;
    display: flex;
    align-items: center;
    background: #eaf2fc;
    border-top: 1px solid #7b90a6;
}
.tab-body .tab-text {
    margin-left: -2px;
}
.tab-plan {
    width: 206px;
    margin-left: -6px;
    padding-right: 12px;
    border-right: 1px solid #8797aa;
}
.tab-new {
    width: 32px;
    height: 28px;
}
.navbar {
    height: 40px;
    display: flex;
    align-items: center;
    padding-left: 5px;
    background: linear-gradient(#eaf2fc, #dfebf8);
}
.back {
    position: relative;
    width: 32px;
    height: 32px;
    border: 1px solid #8fa3b8;
    border-radius: 50%;
    background: #f3f8fd;
}
.urlbar, .search {
    height: 24px;
    display: flex;
    align-items: center;
    background: #fff;
    border: 1px solid #a9bccf;
}
.urlbar {
    flex: 1;
    margin-left: -6px;
    padding-left: 12px;
    gap: 4px;
}
.url {
    flex: 1;
    margin-left: 4px;
    padding-left: 6px;
    line-height: 20px;
    border-left: 1px solid #ddd;
    color: #777;
}
.url b {
    font-weight: normal;
    color: #000;
}
.reload {
    width: 33px;
    height: 18px;
    border-left: 1px solid #ccd6e0;
}
.search {
    width: 372px;
    margin-left: 7px;
    padding-left: 6px;
    gap: 6px;
}
.search input {
    flex: 1;
    border: none;
    padding: 0;
    outline: none;
}
.search input::placeholder {
    font-style: italic;
    color: #666;
}
.nav-icons {
    display: flex;
    height: 38px;
    margin-left: 5px;
}
.nav-icons button {
    width: 36px;
}
.nav-icons .nav-star {
    width: 32px;
}
.nav-icons .nav-menu {
    width: 43px;
    border-left: 1px solid #c3d0de;
}
.bookmarks {
    height: 24px;
    display: flex;
    align-items: center;
    gap: 7px;
    padding: 2px 8px 0 8px;
    background: linear-gradient(#dfebf8, #d9e8f7);
}
.bookmarks a {
    display: flex;
    align-items: center;
    gap: 5px;
}

/* Панель приложения */
.appbar {
    flex: none;
    height: 32px;
    display: flex;
    align-items: center;
    font-size: 12px;
    border-top: 1px solid #8fa5b8;
    border-bottom: 1px solid #6f9ab5;
    background: linear-gradient(#b9e3f2, #93cee8 45%, #62b4df 50%, #62b1dd);
}
.start {
    width: 76px;
    height: 29px;
    gap: 8px;
    font-weight: bold;
    border-radius: 14px;
    border: 1px solid #6bc7ea;
    background: linear-gradient(#fff, #d6f1fb 45%, #a5dff5 55%, #d4f4ff);
}
.app-tasks {
    flex: 1;
    display: flex;
    gap: 5px;
    margin-left: 11px;
    padding-left: 11px;
    border-left: 2px dotted #7cc3e6;
}
.app-tasks button {
    width: 165px;
    height: 26px;
    padding: 2px 0 0 2px;
    justify-content: flex-start;
    font-size: 11px;
    color: #fff;
    border: 1px solid #7ab8df;
    border-radius: 3px;
    background: linear-gradient(#a3cfe9, #7fb4dc 48%, #5f9fd2 52%, #619fd3);
}
.app-tasks button:disabled {
    color: #cfdbe3;
    border-color: #91b5ca;
    background: linear-gradient(#a5c0cf, #9ab8c9 48%, #8baec3 52%, #8fb1c6);
}
.exit {
    width: 81px;
    height: 30px;
    gap: 6px;
    border-radius: 6px 0 0 6px;
    background: linear-gradient(#d3eef7, #b1dcee 50%, #8ccae6 50%, #a9d7ec);
}

/* Окно реестра */
.window {
    position: relative;
    flex: 1;
    min-height: 0;
    display: flex;
    flex-direction: column;
    background: #cdd8e6;
}
.window-title {
    height: 23px;
    display: flex;
    align-items: center;
    justify-content: space-between;
    padding: 1px 4px 0 3px;
}
.tools {
    display: flex;
    gap: 3px;
}
.tool {
    width: 14px;
    height: 15px;
    border: 1px solid #9ebcec;
    border-radius: 3px;
    background: linear-gradient(#fff, #dce8f8);
}
.work {
    flex: 1;
    min-height: 0;
    display: flex;
    gap: 6px;
    background: #dfe8f6;
    border-top: 2px solid #99bbe8;
    border-bottom: 2px solid #99bbe8;
}
.sidebar {
    width: 300px;
    background: #fff;
    border: 1px solid #99bbe8;
    border-width: 0 1px;
}
.sidebar-head {
    height: 26px;
    display: flex;
    align-items: center;
    justify-content: space-between;
    padding: 1px 4px 0 5px;
    border-bottom: 2px solid #99bbe8;
    background: linear-gradient(#dae7f6, #cddef3 45%, #abc7ec 50%, #b8cfee);
}
.tree-head {
    height: 14px;
    background: #ececec;
    border-bottom: 1px solid #c5c5c5;
}
.tree-head span {
    display: block;
    width: 279px;
    height: 14px;
    padding: 5px 10px;
    background: #dae9fb;
    border: 1px solid #aaccf6;
    border-top: none;
}
.tree {
    width: 279px;
    margin: 0;
    padding: 0;
    list-style: none;
    border-right: 1px solid #ededed;
}
.tree li {
    height: 21px;
    display: flex;
    align-items: center;
    gap: 2px;
    padding-left: 33px;
    border-bottom: 1px solid #ededed;
}
.tree .root {
    padding-left: 6px;
}
.registry {
    flex: 1;
    min-width: 0;
    display: flex;
    flex-direction: column;
    background: #fff;
    border: 1px solid #99bbe8;
    border-width: 0 1px;
}
.toolbar {
    flex: none;
    height: 30px;
    display: flex;
    align-items: center;
    gap: 5px;
    padding: 3px 5px 0 4px;
    border-bottom: 1px solid #99bbe8;
    background: linear-gradient(#dfe9f5, #d3e1f1);
}
.btn {
    gap: 2px;
}
.btn svg + svg {
    margin-left: 3px;
}
.btn:disabled {
    opacity: .4;
}
.toolbar .sep {
    margin: 0 4px;
}
.sep {
    flex: none;
    width: 2px;
    height: 15px;
    border-left: 1px solid #98c8ff;
    border-right: 1px solid #fff;
}
.filters {
    margin-left: auto;
    display: flex;
    align-items: center;
    padding-bottom: 5px;
    color: #333;
}
.filters label {
    margin-right: 8px;
}
.combo {
    position: relative;
    width: 110px;
    height: 20px;
    margin-right: 20px;
}
.filters label + .combo-wide {
    width: 120px;
    margin-left: 16px;
    margin-right: 0;
}
.combo select {
    appearance: none;
    width: 100%;
    height: 100%;
    padding: 2px 20px 0 2px;
    border: 1px solid #b5b8c8;
    border-radius: 0;
    color: #000;
    background: #fff;
}
.combo svg {
    position: absolute;
    top: 0;
    right: 0;
    width: 17px;
    height: 20px;
    padding: 6px 4px;
    border: 1px solid #b5b8c8;
    background: linear-gradient(#fff, #dcdcdc);
}

/* Таблица реестра */
.grid-wrap {
    flex: 1;
    overflow: hidden;
}
.grid {
    width: 1620px;
    table-layout: fixed;
    border-collapse: separate;
    border-spacing: 0;
    color: #333;
}
.w20 { width: 20px; }
.w100 { width: 100px; }
.w150 { width: 150px; }
.w200 { width: 200px; }
.w300 { width: 300px; }
.grid th {
    height: 50px;
    padding: 0 3px 0 2px;
    font-weight: normal;
    text-align: left;
    vertical-align: top;
    white-space: nowrap;
    border-right: 1px solid #d0d0d0;
    border-bottom: 1px solid #d0d0d0;
    background: linear-gradient(#fafafa, #f6f6f6 50%, #ededed 55%, #eaeaea);
}
.grid th label {
    display: block;
    padding-left: 2px;
    line-height: 26px;
}
.grid th input {
    display: block;
    width: 100%;
    height: 23px;
    border: 1px solid #b5b8c8;
    background: #fff;
}
.grid .plain {
    padding: 4px 0 0 5px;
    vertical-align: middle;
}
.grid td {
    height: 21px;
    padding: 1px 0 0 5px;
    white-space: nowrap;
    border-right: 1px solid #c8d3e2;
    border-top: 1px dotted #a3bae9;
    border-bottom: 1px dotted #a3bae9;
    background: #dfe8f6;
}
.hscroll {
    height: 15px;
    display: flex;
    background: #f0f0f0;
}
.thumb {
    flex: 1;
    display: flex;
    align-items: center;
    justify-content: center;
    gap: 1px;
    border: 1px solid #979797;
    border-radius: 2px;
    background: linear-gradient(#f5f5f5, #e9e9eb 45%, #d3d3d7 50%, #bfbfc4);
}
.thumb i {
    width: 2px;
    height: 6px;
    border-left: 1px solid #444;
    background: #aaa;
}
.paging {
    flex: none;
    height: 29px;
    display: flex;
    align-items: center;
    padding: 0 4px;
    color: #333;
    border-top: 1px solid #99bbe8;
    background: linear-gradient(#dde8f6, #ccdbee);
}
.paging button {
    width: 18px;
    margin-right: 4px;
}
.paging .sep {
    margin: 0 4px 0 1px;
}
.paging label, .paging span {
    padding-top: 4px;
}
.paging label {
    margin-right: 1px;
}
.paging input {
    width: 38px;
    height: 21px;
    margin-right: 2px;
    padding: 2px 3px 0;
    text-align: right;
    color: #000;
    border: 1px solid #b5b8c8;
}
.paging span + .sep {
    margin: 0 4px;
}
.paging .total {
    margin-left: auto;
}
.window-foot {
    height: 33px;
    display: flex;
    align-items: center;
    justify-content: flex-end;
    padding: 4px 8px 0;
}
.push {
    width: 75px;
    height: 22px;
    padding-top: 2px;
    border: 1px solid #c5c5c5;
    border-radius: 3px;
    background: linear-gradient(#fff, #f5f5f5 50%, #e2e2e2 55%, #ededed);
}

/* Диалог поверх реестра */
.dialog {
    position: absolute;
    left: 623px;
    top: 94px;
    width: 600px;
    padding: 0 5px;
    border: 1px solid #8a9fbd;
    border-radius: 4px 4px 0 0;
    background: #cdd8e6;
    box-shadow: 1px 2px 5px rgba(0, 0, 0, .5);
}
.dialog-title {
    height: 23px;
    padding-top: 1px;
    display: flex;
    align-items: center;
    justify-content: space-between;
}
.dialog-body {
    padding: 5px;
    border: 1px solid #99bbe8;
    background: #dfe8f6;
}
.dialog-panel {
    border: 1px solid #99bbe8;
    background: #fff;
}
.dialog .toolbar {
    height: 27px;
    padding-top: 2px;
    padding-left: 5px;
}
.history-wrap {
    height: 269px;
}
.history {
    width: 100%;
    table-layout: fixed;
    border-spacing: 0;
    color: #333;
}
.history th, .history td {
    width: 138px;
    padding: 0 0 0 5px;
    white-space: nowrap;
    text-align: left;
    border-right: 1px solid #d0d0d0;
}
.history th {
    height: 25px;
    padding-top: 1px;
    font-weight: normal;
    border-bottom: 1px solid #d0d0d0;
    background: linear-gradient(#fafafa, #f6f6f6 45%, #ededed 50%, #eaeaea);
}
.history .rest {
    width: auto;
    border-right: none;
}
.history td {
    height: 21px;
    border-bottom: 1px solid #ededed;
}
.history tr:nth-child(even) td {
    background: #fafafa;
}
.history .mid {
    padding: 0;
    text-align: center;
}
.mid svg {
    margin: auto;
}
.history tr .selected, .history tr:nth-child(even) .selected {
    color: #000;
    background: #b8cfee;
}
.dialog .paging {
    height: 27px;
}
.dialog-foot {
    height: 38px;
    display: flex;
    align-items: center;
    justify-content: flex-end;
    padding-right: 10px;
}
.tip {
    position: absolute;
    left: 504px;
    top: 167px;
    width: 302px;
    padding: 3px 3px 1px 4px;
    line-height: 15px;
    white-space: nowrap;
    color: #444;
    border: 1px solid #8eaace;
    border-radius: 3px;
    background: #e9f2ff;
    box-shadow: 2px 2px 3px rgba(0, 0, 0, .3);
}

/* Панель Windows */
.taskbar {
    position: relative;
    flex: none;
    height: 40px;
    display: flex;
    align-items: center;
    color: #fff;
    font-size: 12px;
    background: #5d5750;
    border-top: 1px solid #2e3c42;
}
.stones {
    position: absolute;
    top: 0;
    left: 0;
}
.orb, .apps, .tray, .show-desktop {
    position: relative;
}
.orb {
    width: 40px;
    margin-left: 7px;
}
.apps {
    display: flex;
    gap: 4px;
    margin-left: 13px;
    flex: 1;
}
.run, .pin {
    width: 58px;
    height: 38px;
    border-radius: 3px;
}
.run {
    border: 1px solid rgba(255, 255, 255, .6);
    background: linear-gradient(135deg, rgba(255, 255, 255, .45), rgba(255, 255, 255, .15));
}
.lit {
    background: linear-gradient(rgba(255, 255, 255, .85), rgba(235, 235, 235, .65));
}
.stack {
    width: 54px;
    margin-right: 4px;
    box-shadow: 3px 0 0 -1px #8d8680, 6px 0 0 -2px #c5c0ba;
}
.stack2 {
    width: 52px;
    margin-right: 6px;
    box-shadow: 4px 0 0 -1px #8d8680, 8px 0 0 -2px #c5c0ba;
}
.tray {
    display: flex;
    align-items: center;
    gap: 9px;
}
.lang {
    margin-right: 5px;
    padding-bottom: 6px;
}
.clock {
    width: 74px;
    display: flex;
    flex-direction: column;
    align-items: center;
    line-height: 17px;
    padding-top: 2px;
}
.show-desktop {
    width: 15px;
    height: 39px;
    border: 1px solid rgba(255, 255, 255, .5);
    background: rgba(60, 60, 60, .4);
}
```
